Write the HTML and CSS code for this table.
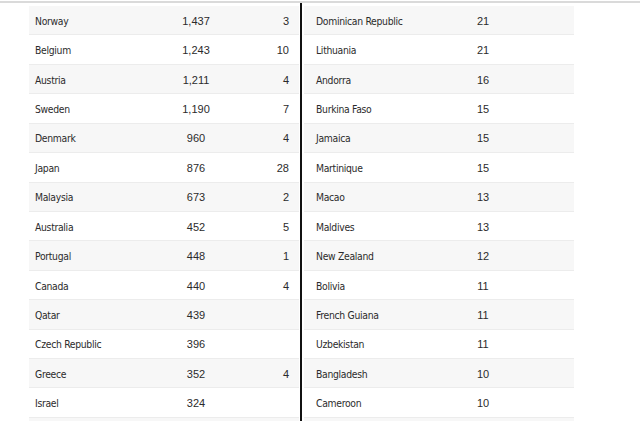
FILE: index.html
```html
<!DOCTYPE html>
<html lang="en">
<head>
<meta charset="utf-8">
<title>Cases by country</title>
<link rel="stylesheet" href="styles.css">
</head>
<body>
<div class="page">
  <div class="table">
    <div class="row"><span class="name">Norway</span><span class="num">1,437</span><span class="deaths">3</span></div>
    <div class="row"><span class="name">Belgium</span><span class="num">1,243</span><span class="deaths">10</span></div>
    <div class="row"><span class="name">Austria</span><span class="num">1,211</span><span class="deaths">4</span></div>
    <div class="row"><span class="name">Sweden</span><span class="num">1,190</span><span class="deaths">7</span></div>
    <div class="row"><span class="name">Denmark</span><span class="num">960</span><span class="deaths">4</span></div>
    <div class="row"><span class="name">Japan</span><span class="num">876</span><span class="deaths">28</span></div>
    <div class="row"><span class="name">Malaysia</span><span class="num">673</span><span class="deaths">2</span></div>
    <div class="row"><span class="name">Australia</span><span class="num">452</span><span class="deaths">5</span></div>
    <div class="row"><span class="name">Portugal</span><span class="num">448</span><span class="deaths">1</span></div>
    <div class="row"><span class="name">Canada</span><span class="num">440</span><span class="deaths">4</span></div>
    <div class="row"><span class="name">Qatar</span><span class="num">439</span><span class="deaths"></span></div>
    <div class="row"><span class="name">Czech Republic</span><span class="num">396</span><span class="deaths"></span></div>
    <div class="row"><span class="name">Greece</span><span class="num">352</span><span class="deaths">4</span></div>
    <div class="row"><span class="name">Israel</span><span class="num">324</span><span class="deaths"></span></div>
    <div class="row"><span class="name"></span><span class="num"></span><span class="deaths"></span></div>
  </div>
  <div class="divider"></div>
  <div class="table table-right">
    <div class="row"><span class="name">Dominican Republic</span><span class="num">21</span><span class="deaths"></span></div>
    <div class="row"><span class="name">Lithuania</span><span class="num">21</span><span class="deaths"></span></div>
    <div class="row"><span class="name">Andorra</span><span class="num">16</span><span class="deaths"></span></div>
    <div class="row"><span class="name">Burkina Faso</span><span class="num">15</span><span class="deaths"></span></div>
    <div class="row"><span class="name">Jamaica</span><span class="num">15</span><span class="deaths"></span></div>
    <div class="row"><span class="name">Martinique</span><span class="num">15</span><span class="deaths"></span></div>
    <div class="row"><span class="name">Macao</span><span class="num">13</span><span class="deaths"></span></div>
    <div class="row"><span class="name">Maldives</span><span class="num">13</span><span class="deaths"></span></div>
    <div class="row"><span class="name">New Zealand</span><span class="num">12</span><span class="deaths"></span></div>
    <div class="row"><span class="name">Bolivia</span><span class="num">11</span><span class="deaths"></span></div>
    <div class="row"><span class="name">French Guiana</span><span class="num">11</span><span class="deaths"></span></div>
    <div class="row"><span class="name">Uzbekistan</span><span class="num">11</span><span class="deaths"></span></div>
    <div class="row"><span class="name">Bangladesh</span><span class="num">10</span><span class="deaths"></span></div>
    <div class="row"><span class="name">Cameroon</span><span class="num">10</span><span class="deaths"></span></div>
    <div class="row"><span class="name"></span><span class="num"></span><span class="deaths"></span></div>
  </div>
</div>
</body>
</html>
```
FILE: styles.css
```css
html, body {
  margin: 0;
  padding: 0;
  background: #ffffff;
  overflow: hidden;
}

.page {
  display: flex;
  align-items: stretch;
  height: 420px;
  margin-top: 1px;
  padding-left: 29px;
  border-top: 2px solid #dadada;
  overflow: hidden;
  color: #2b2b2b;
  font-family: "Liberation Sans", Arial, sans-serif;
  font-size: 11px;
}

.table {
  width: 270px;
  padding-top: 3px;
  flex: none;
}

.divider {
  flex: none;
  width: 2px;
  margin: -2px 2px 0 1px;
  background: #111111;
}

.row {
  display: grid;
  grid-template-columns: 131px 60px 1fr;
  align-items: center;
  box-sizing: border-box;
  height: 29.43px;
  padding: 1px 10px 0 6px;
  border-bottom: 1px solid #ececec;
}

.row:nth-child(odd) {
  background: #f7f7f7;
}

.table-right .row {
  grid-template-columns: 137px 60px 1fr;
  padding-left: 12px;
}

.name {
  font-family: "DejaVu Sans Condensed", "Liberation Sans", sans-serif;
  font-size: 10.3px;
  letter-spacing: -0.3px;
  white-space: nowrap;
}

.num {
  text-align: center;
}

.deaths {
  text-align: right;
}
```
